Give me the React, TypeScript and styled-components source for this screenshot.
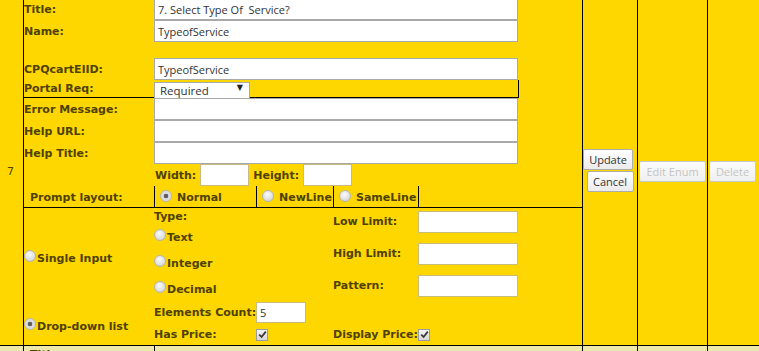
import React from 'react';
import styled, { createGlobalStyle } from 'styled-components';

const ink = '#4f4100';
const gold = '#ffd700';
const paleGold = '#eee8aa';

const GlobalStyle = createGlobalStyle`
  html, body {
    margin: 0;
    padding: 0;
    overflow: hidden;
    background: ${gold};
  }
`;

const Page = styled.div`
  margin-top: -2px;
  width: 780px;
  color: ${ink};
  font-family: 'DejaVu Sans', Verdana, sans-serif;
`;

const TableRow = styled.div<{ $pale?: boolean }>`
  display: grid;
  grid-template-columns: 24px 559px 55px 70px 72px;
  background: ${({ $pale }) => ($pale ? paleGold : gold)};
  border-bottom: 1px solid #000;
`;

const Cell = styled.div<{ $center?: boolean }>`
  border-right: 1px solid #000;
  box-sizing: border-box;
  display: flex;
  flex-direction: column;
  align-items: center;
  justify-content: ${({ $center }) => ($center ? 'center' : 'flex-start')};
  gap: 2px;
`;

const IndexCell = styled(Cell)`
  font-size: 11px;
  padding-right: 2px;
`;

const MainCell = styled.div`
  border-right: 1px solid #000;
  display: flex;
  flex-direction: column;
`;

const Label = styled.span`
  font-weight: bold;
  font-size: 11px;
  white-space: nowrap;
`;

const FieldRow = styled.div`
  display: grid;
  grid-template-columns: 130px 364px;
  align-items: center;
  height: 22px;
`;

const Spacer = styled.div<{ $h: number }>`
  height: ${({ $h }) => $h}px;
`;

const TextInput = styled.input<{ $w?: number; $h?: number; $soft?: boolean }>`
  box-sizing: border-box;
  width: ${({ $w }) => ($w ? `${$w}px` : '100%')};
  height: ${({ $h }) => $h ?? 22}px;
  margin: 0;
  padding: 0 3px;
  border: 1px solid ${({ $soft }) => ($soft ? '#c9bb7c' : '#a9a9a9')};
  background: #fff;
  color: #333;
  font-family: 'Open Sans', 'Segoe UI', sans-serif;
  font-size: 11px;
  outline: none;
`;

const PortalRow = styled.div`
  display: grid;
  grid-template-columns: 130px 364px;
  align-items: center;
  width: 495px;
  height: 18px;
  box-sizing: border-box;
  border-bottom: 1px solid #000;
  border-right: 1px solid #000;
`;

const SelectWrap = styled.div`
  position: relative;
  width: 96px;
  height: 17px;
  align-self: start;
`;

const Select = styled.select`
  appearance: none;
  box-sizing: border-box;
  width: 100%;
  height: 100%;
  margin: 0;
  padding: 0 5px;
  border: 1px solid #a9a9a9;
  border-radius: 0;
  background: #fff;
  color: #333;
  font-family: 'Open Sans', 'Segoe UI', sans-serif;
  font-size: 11.5px;
`;

const Arrow = styled.span`
  position: absolute;
  right: 7px;
  top: 3px;
  font-size: 8px;
  color: #222;
  pointer-events: none;
`;

const SizeRow = styled.div`
  display: flex;
  align-items: center;
  height: 22px;
  padding-left: 131px;
  gap: 4px;
`;

const PromptRow = styled.div`
  display: grid;
  grid-template-columns: 130px 102px 77px 86px;
  height: 22px;
  box-sizing: border-box;
  border-bottom: 1px solid #000;
`;

const PromptLabel = styled.div`
  display: flex;
  align-items: center;
  padding-left: 6px;
  padding-top: 1px;
`;

const PromptOption = styled.label<{ $last?: boolean }>`
  display: flex;
  align-items: center;
  gap: 5px;
  padding-left: 5px;
  padding-top: 2px;
  border-left: 1px solid #000;
  border-right: ${({ $last }) => ($last ? '1px solid #000' : 'none')};
  box-sizing: border-box;
`;

const Radio = styled.input.attrs({ type: 'radio' })`
  appearance: none;
  box-sizing: border-box;
  width: 12px;
  height: 12px;
  margin: 0 0 4px 0;
  flex: none;
  border-radius: 50%;
  border: 1px solid #b4b4b4;
  background: radial-gradient(circle at 45% 35%, #fafafa 0%, #e2e2e2 55%, #c8c8c8 100%);
  &:checked {
    background: radial-gradient(circle, #555 0, #666 2px, #d8d8d8 2.6px, #e8e8e8 100%);
  }
`;

const RadioLabel = styled.label`
  display: flex;
  align-items: center;
  gap: 1px;
`;

const SingleBlock = styled.div`
  display: grid;
  grid-template-columns: 130px 179px 85px 100px;
  height: 93px;
`;

const ModeCell = styled.div<{ $pad?: number }>`
  display: flex;
  align-items: center;
  padding-top: ${({ $pad }) => $pad ?? 0}px;
`;

const TypeList = styled.div`
  display: grid;
  grid-template-rows: 16px 26px 26px 26px;
  align-items: center;
`;

const LimitColumn = styled.div`
  display: grid;
  grid-template-rows: 32px 32px 29px;
  padding-top: 3px;
`;

const LimitLabel = styled(Label)`
  height: 22px;
  line-height: 22px;
`;

const DropBlock = styled.div`
  display: grid;
  grid-template-columns: 130px 102px 77px 85px 100px;
  grid-template-rows: 23px 21px;
  align-items: center;
`;

const DropMode = styled(ModeCell)`
  grid-row: 1 / span 2;
  align-self: stretch;
`;

const CheckBox = styled.span`
  box-sizing: border-box;
  width: 12px;
  height: 12px;
  border: 1px solid #9c9c9c;
  background: linear-gradient(#f4f4f4, #d6d6d6);
  display: inline-flex;
  align-items: center;
  justify-content: center;
`;

const Button = styled.button<{ $w: number; $h: number; $nudge?: number }>`
  box-sizing: border-box;
  width: ${({ $w }) => $w}px;
  height: ${({ $h }) => $h}px;
  margin: 0 0 0 ${({ $nudge }) => $nudge ?? 0}px;
  padding: 0;
  border: 1px solid #adadad;
  border-radius: 2px;
  background: linear-gradient(#ffffff, #ebebeb);
  color: #333;
  font-family: 'Open Sans', 'Segoe UI', sans-serif;
  font-size: 11px;
  &:disabled {
    color: #c4c4c4;
    border-color: #c8c8c8;
    background: linear-gradient(#fbfbfb, #efefef);
  }
`;

const ButtonStack = styled(Cell)`
  padding-bottom: 2px;
  gap: 1px;
`;

const PaleMain = styled.div`
  display: grid;
  grid-template-columns: 131px 1fr;
  border-right: 1px solid #000;
  height: 22px;
`;

const PaleLabel = styled.div`
  border-right: 1px solid #000;
  padding: 2px 0 0 6px;
  font-weight: bold;
  font-size: 11px;
`;

const PaleValue = styled.div`
  padding: 2px 0 0 5px;
  font-family: 'Open Sans', 'Segoe UI', sans-serif;
  font-size: 11px;
  color: #333;
  white-space: nowrap;
`;

const Check = () => (
  <CheckBox>
    <svg width="9" height="9" viewBox="0 0 9 9">
      <path d="M1.2 4.6 L3.6 7 L7.8 1.6" fill="none" stroke="#3a3a3a" strokeWidth="1.8" />
    </svg>
  </CheckBox>
);

const App: React.FC = () => {
  return (
    <Page>
      <GlobalStyle />
      <TableRow>
        <IndexCell $center>7</IndexCell>
        <MainCell>
          <FieldRow>
            <Label>Title:</Label>
            <TextInput defaultValue="7. Select Type Of  Service?" />
          </FieldRow>
          <FieldRow>
            <Label>Name:</Label>
            <TextInput defaultValue="TypeofService" />
          </FieldRow>
          <Spacer $h={16} />
          <FieldRow>
            <Label>CPQcartElID:</Label>
            <TextInput defaultValue="TypeofService" />
          </FieldRow>
          <PortalRow>
            <Label>Portal Req:</Label>
            <SelectWrap>
              <Select defaultValue="Required">
                <option>Required</option>
                <option>Optional</option>
              </Select>
              <Arrow>▼</Arrow>
            </SelectWrap>
          </PortalRow>
          <FieldRow>
            <Label>Error Message:</Label>
            <TextInput />
          </FieldRow>
          <FieldRow>
            <Label>Help URL:</Label>
            <TextInput />
          </FieldRow>
          <FieldRow>
            <Label>Help Title:</Label>
            <TextInput />
          </FieldRow>
          <SizeRow>
            <Label>Width:</Label>
            <TextInput $w={49} $h={22} $soft />
            <Label>Height:</Label>
            <TextInput $w={49} $h={22} $soft />
          </SizeRow>
          <PromptRow>
            <PromptLabel>
              <Label>Prompt layout:</Label>
            </PromptLabel>
            <PromptOption>
              <Radio name="layout" defaultChecked />
              <Label>Normal</Label>
            </PromptOption>
            <PromptOption>
              <Radio name="layout" />
              <Label>NewLine</Label>
            </PromptOption>
            <PromptOption $last>
              <Radio name="layout" />
              <Label>SameLine</Label>
            </PromptOption>
          </PromptRow>
          <SingleBlock>
            <ModeCell $pad={4}>
              <RadioLabel>
                <Radio name="mode" />
                <Label>Single Input</Label>
              </RadioLabel>
            </ModeCell>
            <TypeList>
              <Label>Type:</Label>
              <RadioLabel>
                <Radio name="type" />
                <Label>Text</Label>
              </RadioLabel>
              <RadioLabel>
                <Radio name="type" />
                <Label>Integer</Label>
              </RadioLabel>
              <RadioLabel>
                <Radio name="type" />
                <Label>Decimal</Label>
              </RadioLabel>
            </TypeList>
            <LimitColumn>
              <LimitLabel>Low Limit:</LimitLabel>
              <LimitLabel>High Limit:</LimitLabel>
              <LimitLabel>Pattern:</LimitLabel>
            </LimitColumn>
            <LimitColumn>
              <TextInput $w={100} $soft />
              <TextInput $w={100} $soft />
              <TextInput $w={100} $soft />
            </LimitColumn>
          </SingleBlock>
          <DropBlock>
            <DropMode $pad={6}>
              <RadioLabel>
                <Radio name="mode" defaultChecked />
                <Label>Drop-down list</Label>
              </RadioLabel>
            </DropMode>
            <Label>Elements Count:</Label>
            <TextInput $w={50} $h={21} $soft defaultValue="5" />
            <span />
            <span />
            <Label>Has Price:</Label>
            <Check />
            <Label>Display Price:</Label>
            <Check />
          </DropBlock>
        </MainCell>
        <ButtonStack $center>
          <Button $w={50} $h={21} $nudge={-4}>Update</Button>
          <Button $w={47} $h={21}>Cancel</Button>
        </ButtonStack>
        <Cell $center>
          <Button $w={67} $h={21} disabled>Edit Enum</Button>
        </Cell>
        <Cell $center>
          <Button $w={47} $h={21} $nudge={-22} disabled>Delete</Button>
        </Cell>
      </TableRow>
      <TableRow $pale>
        <Cell />
        <PaleMain>
          <PaleLabel>Title:</PaleLabel>
          <PaleValue>8. Number of landscapes (Category L1&amp;2/Package)?</PaleValue>
        </PaleMain>
        <Cell />
        <Cell />
        <Cell />
      </TableRow>
    </Page>
  );
};

export default App;
